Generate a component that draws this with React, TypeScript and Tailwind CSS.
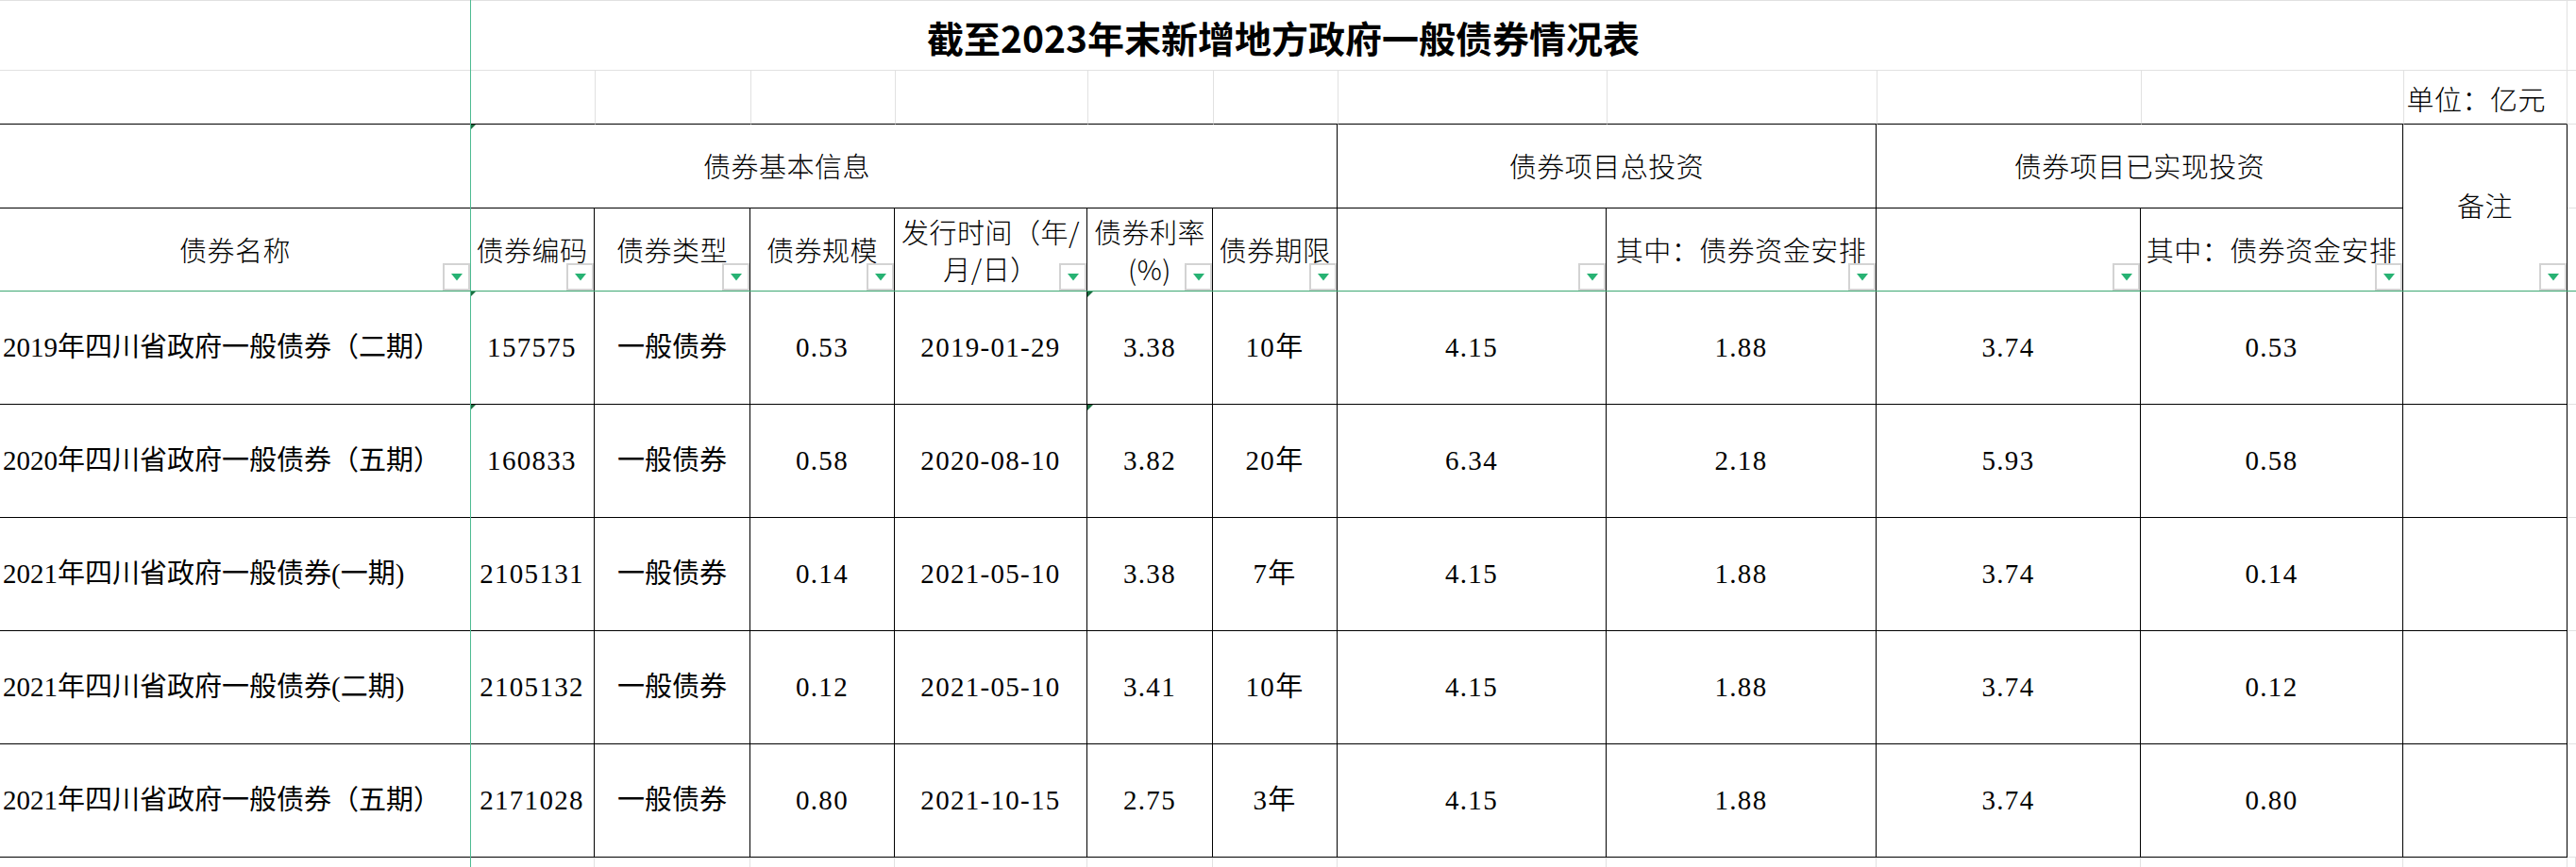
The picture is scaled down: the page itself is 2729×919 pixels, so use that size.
import React from 'react';

const rows = [
  ['2019年四川省政府一般债券（二期）', '157575', '一般债券', '0.53', '2019-01-29', '3.38', '10年', '4.15', '1.88', '3.74', '0.53'],
  ['2020年四川省政府一般债券（五期）', '160833', '一般债券', '0.58', '2020-08-10', '3.82', '20年', '6.34', '2.18', '5.93', '0.58'],
  ['2021年四川省政府一般债券(一期)', '2105131', '一般债券', '0.14', '2021-05-10', '3.38', '7年', '4.15', '1.88', '3.74', '0.14'],
  ['2021年四川省政府一般债券(二期)', '2105132', '一般债券', '0.12', '2021-05-10', '3.41', '10年', '4.15', '1.88', '3.74', '0.12'],
  ['2021年四川省政府一般债券（五期）', '2171028', '一般债券', '0.80', '2021-10-15', '2.75', '3年', '4.15', '1.88', '3.74', '0.80'],
];

// 第二行表头（债券名称 ~ 其中：债券资金安排），备注单独跨两行
const subHeaders: React.ReactNode[] = [
  '债券名称',
  '债券编码',
  '债券类型',
  '债券规模',
  <>发行时间（年/<br />月/日）</>,
  <>债券利率<br />(%)</>,
  '债券期限',
  '',
  '其中：债券资金安排',
  '',
  '其中：债券资金安排',
];

function FilterButton() {
  return (
    <div className="absolute right-0 bottom-0 w-[29px] h-[29px] border-2 border-[#d3d3d3] bg-white flex items-center justify-center">
      <svg width="12" height="8" viewBox="0 0 12 8">
        <polygon points="0,0 12,0 6,7.5" fill="#27b273" />
      </svg>
    </div>
  );
}

function Marker() {
  return (
    <svg className="absolute left-0 top-0" width="6" height="6" viewBox="0 0 6 6">
      <polygon points="0,0 6,0 0,6" fill="#1d6f42" />
    </svg>
  );
}

export default function App() {
  const head = "font-['Noto_Sans_CJK_SC',sans-serif] font-light text-[29px] tracking-[0.5px] text-black";
  const data = "font-['Liberation_Serif','Noto_Sans_CJK_SC',serif] text-[29px] text-black";

  return (
    <div className="relative w-[2729px] h-[919px] bg-white overflow-hidden">
      <div className="grid grid-cols-[498px_132px_165px_153px_204px_133px_132px_285px_286px_280px_278px_174px_9px] grid-rows-[75px_57px_89px_88px_120px_120px_120px_120px_120px_10px]">
        {/* 标题行 */}
        <div className="col-span-12 border-t border-b border-r border-[#e1e1e1] flex items-center justify-center pt-1">
          <span className="font-['Noto_Sans_CJK_SC',sans-serif] font-bold text-[39px] text-black leading-none">
            截至2023年末新增地方政府一般债券情况表
          </span>
        </div>
        <div className="border-t border-b border-[#e1e1e1]" />

        {/* 单位行 */}
        {Array.from({ length: 11 }).map((_, i) => (
          <div key={i} className={`border-b border-b-black ${i === 0 ? '' : 'border-l border-l-[#e1e1e1]'}`} />
        ))}
        <div className={`border-l border-r border-l-[#e1e1e1] border-r-[#e1e1e1] border-b border-b-black flex items-center justify-end pr-[22px] pt-1 ${head}`}>
          单位：亿元
        </div>
        <div className="border-b border-[#e1e1e1]" />

        {/* 表头第一行 */}
        <div className="border-b border-black" />
        <div className={`relative col-span-6 border-r border-b border-black flex items-center pl-[247px] ${head}`}>
          <Marker />
          债券基本信息
        </div>
        <div className={`col-span-2 border-r border-b border-black flex items-center justify-center ${head}`}>
          债券项目总投资
        </div>
        <div className={`col-span-2 border-r border-b border-black flex items-center justify-center ${head}`}>
          债券项目已实现投资
        </div>
        <div className={`relative row-span-2 border-r border-b border-black flex items-center justify-center pb-[4px] ${head}`}>
          备注
          <FilterButton />
        </div>
        <div className="border-b border-[#e1e1e1]" />

        {/* 表头第二行 */}
        {subHeaders.map((h, i) => (
          <div
            key={i}
            className={`relative border-b border-black ${i === 0 ? '' : 'border-r'} flex items-center justify-center text-center leading-[39px] ${head}`}
          >
            <span className="whitespace-nowrap">{h}</span>
            <FilterButton />
          </div>
        ))}
        <div className="border-b border-[#e1e1e1]" />

        {/* 数据行 */}
        {rows.map((r, ri) => (
          <React.Fragment key={ri}>
            {r.map((v, ci) => (
              <div
                key={ci}
                className={`relative border-b border-black flex items-center whitespace-nowrap ${data} ${
                  ci === 0 ? 'justify-start pl-[3px]' : 'border-r justify-center'
                } ${ci === 0 || ci === 2 ? '' : 'tracking-[1.3px]'}`}
              >
                {ri < 2 && (ci === 1 || ci === 5) && <Marker />}
                {v}
              </div>
            ))}
            <div className="border-r border-b border-black" />
            <div className="border-b border-[#e1e1e1]" />
          </React.Fragment>
        ))}

        {/* 底部空行 */}
        {Array.from({ length: 13 }).map((_, i) => (
          <div key={i} className={i === 0 ? '' : 'border-r border-[#e1e1e1]'} />
        ))}
      </div>

      {/* 冻结窗格线 */}
      <div className="absolute left-[498px] top-0 bottom-0 w-px bg-[#4dbb91]" />
      <div className="absolute left-0 right-0 top-[308px] h-px bg-[#3fa874]" />
    </div>
  );
}
